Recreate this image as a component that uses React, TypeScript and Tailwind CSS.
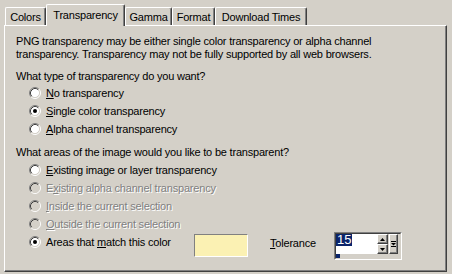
import React from "react";

const tabs = [
  { label: "Colors", w: "w-[41px]", active: false },
  { label: "Transparency", w: "w-[79px]", active: true },
  { label: "Gamma", w: "w-[47px]", active: false },
  { label: "Format", w: "w-[43px]", active: false },
  { label: "Download Times", w: "w-[92px]", active: false },
];

function Radio({ checked = false, disabled = false }: { checked?: boolean; disabled?: boolean }) {
  return (
    <svg width="12" height="12" viewBox="0 0 12 12" className="shrink-0">
      <circle cx="6" cy="6" r="4.5" fill={disabled ? "#d4d0c8" : "#ffffff"} />
      <path d="M2.11 9.89 A5.5 5.5 0 0 1 9.89 2.11" fill="none" stroke="#808080" strokeWidth="1" />
      <path d="M9.89 2.11 A5.5 5.5 0 0 1 2.11 9.89" fill="none" stroke="#ffffff" strokeWidth="1" />
      <path d="M2.82 9.18 A4.5 4.5 0 0 1 9.18 2.82" fill="none" stroke="#404040" strokeWidth="1" />
      <path d="M9.18 2.82 A4.5 4.5 0 0 1 2.82 9.18" fill="none" stroke="#d4d0c8" strokeWidth="1" />
      {checked && <circle cx="6" cy="6" r="2" fill={disabled ? "#808080" : "#000000"} />}
    </svg>
  );
}

function Option({
  checked,
  disabled,
  children,
}: {
  checked?: boolean;
  disabled?: boolean;
  children: React.ReactNode;
}) {
  return (
    <div className="flex items-center h-[18px] pl-[13px] gap-[5px]">
      <Radio checked={checked} disabled={disabled} />
      <span className={disabled ? "text-[#808080] [text-shadow:1px_1px_0_#ffffff]" : ""}>{children}</span>
    </div>
  );
}

function SpinButton({ up, tall }: { up?: boolean; tall?: boolean }) {
  return (
    <div
      className={`flex items-center justify-center bg-[#d4d0c8] border border-t-white border-l-white border-r-[#404040] border-b-[#404040] shadow-[inset_-1px_-1px_#808080] ${
        tall ? "w-[9px] h-[20px]" : "w-[11px] h-[10px]"
      }`}
    >
      {tall ? (
        <svg width="5" height="8" viewBox="0 0 5 8">
          <rect x="0" y="1" width="5" height="1" fill="#000" />
          <path d="M0 3 H5 L2.5 5.5 Z" fill="#000" />
          <rect x="0" y="6" width="5" height="1" fill="#000" />
        </svg>
      ) : (
        <svg width="5" height="3" viewBox="0 0 5 3">
          {up ? <path d="M2.5 0 L5 3 H0 Z" fill="#000" /> : <path d="M0 0 H5 L2.5 3 Z" fill="#000" />}
        </svg>
      )}
    </div>
  );
}

export default function App() {
  return (
    <div className="w-[452px] h-[274px] bg-[#d4d0c8] overflow-hidden text-[11px] leading-[13px] tracking-[-0.2px] text-black font-['Liberation_Sans',Arial,sans-serif]">
      {/* tab strip */}
      <div className="flex items-end h-[26px] pt-[4px] pl-[5px]">
        {tabs.map((t) =>
          t.active ? (
            <div
              key={t.label}
              className={`${t.w} h-[22px] relative z-10 bg-[#d4d0c8] flex justify-center pt-[4px] border-t border-l border-r border-t-white border-l-white border-r-[#404040] rounded-t-[2px] shadow-[inset_-1px_0_#808080]`}
            >
              {t.label}
            </div>
          ) : (
            <div
              key={t.label}
              className={`${t.w} h-[18px] mb-[1px] flex justify-center pt-[3px] border-t border-l border-r border-t-white border-l-white border-r-[#404040] rounded-t-[2px] shadow-[inset_-1px_0_#808080]`}
            >
              {t.label}
            </div>
          )
        )}
      </div>

      {/* panel */}
      <div className="-mt-px ml-[4px] w-[443px] h-[247px] border border-t-white border-l-white border-r-[#404040] border-b-[#404040] shadow-[inset_-1px_-1px_#808080] pt-[9px] pl-[11px]">
        <p>
          PNG transparency may be either single color transparency or alpha channel
          <br />
          transparency. Transparency may not be fully supported by all web browsers.
        </p>

        <p className="mt-[9px]">What type of transparency do you want?</p>
        <div className="mt-[1px]">
          <Option>
            <span className="underline">N</span>o transparency
          </Option>
          <Option checked>
            <span className="underline">S</span>ingle color transparency
          </Option>
          <Option>
            <span className="underline">A</span>lpha channel transparency
          </Option>
        </div>

        <p className="mt-[8px]">What areas of the image would you like to be transparent?</p>
        <div className="mt-[2px]">
          <Option>
            <span className="underline">E</span>xisting image or layer transparency
          </Option>
          <Option disabled>
            E<span className="underline">x</span>isting alpha channel transparency
          </Option>
          <Option disabled>
            <span className="underline">I</span>nside the current selection
          </Option>
          <Option disabled>
            <span className="underline">O</span>utside the current selection
          </Option>

          <div className="flex items-start">
            <div className="flex items-center h-[18px] pl-[13px] gap-[5px]">
              <Radio checked />
              <span className="w-[148px]">
                Areas that <span className="underline">m</span>atch this color
              </span>
            </div>
            <div className="mt-[1px] w-[54px] h-[23px] bg-[#fbf1b3] border border-t-[#808080] border-l-[#808080] border-r-white border-b-white" />
            <div className="ml-[22px] w-[64px] h-[18px] mt-[1px] flex items-center">
              <span>
                <span className="underline">T</span>olerance
              </span>
            </div>
            <div className="-mt-px w-[68px] h-[28px] border border-t-[#808080] border-l-[#808080] border-r-white border-b-white">
              <div className="w-full h-full border border-t-[#404040] border-l-[#404040] border-r-[#d4d0c8] border-b-[#d4d0c8] flex flex-col">
                <div className="flex h-[20px]">
                  <div className="w-[41px] h-[20px] bg-white">
                    <span className="inline-block bg-[#0a246a] text-white text-[13px] leading-[12px] tracking-normal px-[1px]">15</span>
                  </div>
                  <div className="flex flex-col">
                    <SpinButton up />
                    <SpinButton />
                  </div>
                  <div className="ml-[1px]">
                    <SpinButton tall />
                  </div>
                </div>
                <div className="h-[4px] flex">
                  <div className="w-[4px] h-[4px] bg-[#0a246a]" />
                </div>
              </div>
            </div>
          </div>
        </div>
      </div>
    </div>
  );
}
